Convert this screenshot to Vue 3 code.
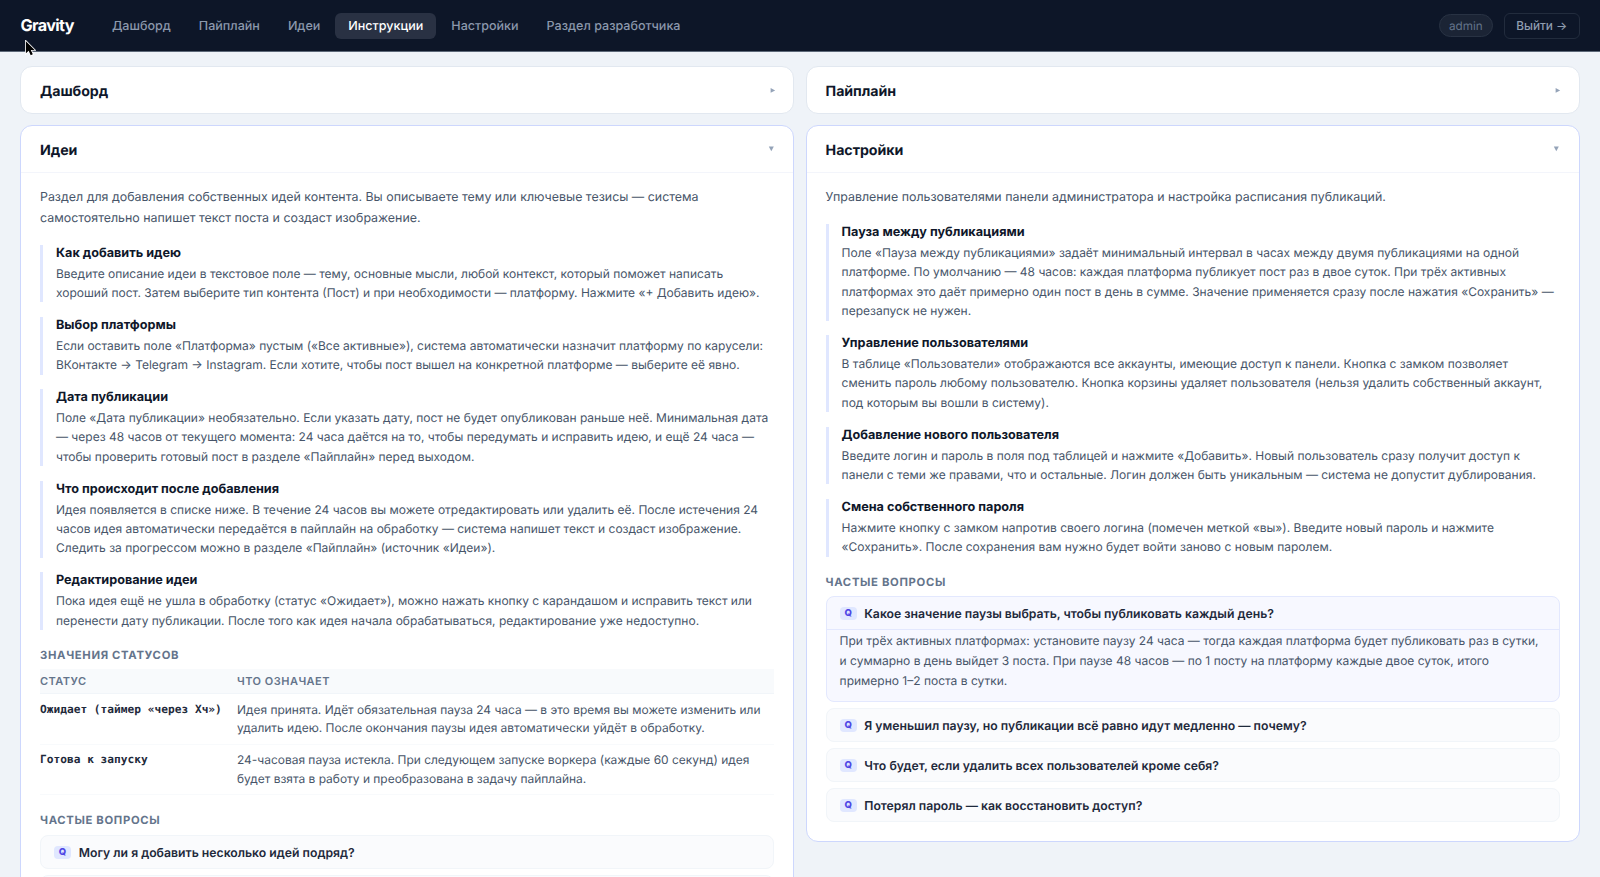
<template>
    <div class="page">
        <header class="topbar">
            <div class="brand">Gravity</div>
            <nav class="menu">
                <a v-for="item in menu" :key="item" class="menu-item" :class="{ active: item === current }" @click="current = item">{{ item }}</a>
            </nav>
            <span class="user">admin</span>
            <button class="logout">Выйти →</button>
        </header>
        <main class="columns">
            <div class="column" v-for="(column, index) in columns" :key="index">
                <section class="card" :class="{ open: card.open }" v-for="card in column" :key="card.title">
                    <div class="card-head" @click="card.open = !card.open">
                        <h2 class="card-title">{{ card.title }}</h2>
                        <svg v-if="card.open" class="arrow" viewBox="0 0 8 8"><path d="M.8 1.5h5L3.3 6.2z" /></svg>
                        <svg v-else class="arrow" viewBox="0 0 8 8"><path d="M2.6 2v4.8l4.6-2.4z" /></svg>
                    </div>
                    <div v-if="card.open && card.intro" class="card-body">
                        <p class="intro">{{ card.intro }}</p>
                        <div class="block" v-for="block in card.blocks" :key="block.title">
                            <h3 class="block-title">{{ block.title }}</h3>
                            <p class="block-text">{{ block.text }}</p>
                        </div>
                        <template v-if="card.statuses">
                            <h4 class="label">Значения статусов</h4>
                            <table class="statuses">
                                <thead>
                                    <tr><th>Статус</th><th>Что означает</th></tr>
                                </thead>
                                <tbody>
                                    <tr v-for="row in card.statuses" :key="row.name">
                                        <td class="status-name">{{ row.name }}</td>
                                        <td>{{ row.text }}</td>
                                    </tr>
                                </tbody>
                            </table>
                        </template>
                        <h4 class="label">Частые вопросы</h4>
                        <div class="faq" :class="{ open: item.open }" v-for="item in card.faq" :key="item.q">
                            <div class="question" @click="item.open = !item.open">
                                <span v-if="item.q" class="badge">Q</span>
                                <span>{{ item.q }}</span>
                            </div>
                            <p v-if="item.open && item.a" class="answer">{{ item.a }}</p>
                        </div>
                    </div>
                </section>
            </div>
        </main>
        <svg class="cursor" viewBox="0 0 12 18"><path d="M1 1v13.2l3-2.8 2.2 5 2.3-1-2.2-4.8h4.2z" /></svg>
    </div>
</template>

<script setup>
import { ref } from 'vue'

const menu = ['Дашборд', 'Пайплайн', 'Идеи', 'Инструкции', 'Настройки', 'Раздел разработчика']
const current = ref('Инструкции')

const columns = ref([
    [
        { title: 'Дашборд', open: false },
        {
            title: 'Идеи',
            open: true,
            intro: 'Раздел для добавления собственных идей контента. Вы описываете тему или ключевые тезисы — система самостоятельно напишет текст поста и создаст изображение.',
            blocks: [
                { title: 'Как добавить идею', text: 'Введите описание идеи в текстовое поле — тему, основные мысли, любой контекст, который поможет написать хороший пост. Затем выберите тип контента (Пост) и при необходимости — платформу. Нажмите «+ Добавить идею».' },
                { title: 'Выбор платформы', text: 'Если оставить поле «Платформа» пустым («Все активные»), система автоматически назначит платформу по карусели: ВКонтакте → Telegram → Instagram. Если хотите, чтобы пост вышел на конкретной платформе — выберите её явно.' },
                { title: 'Дата публикации', text: 'Поле «Дата публикации» необязательно. Если указать дату, пост не будет опубликован раньше неё. Минимальная дата — через 48 часов от текущего момента: 24 часа даётся на то, чтобы передумать и исправить идею, и ещё 24 часа — чтобы проверить готовый пост в разделе «Пайплайн» перед выходом.' },
                { title: 'Что происходит после добавления', text: 'Идея появляется в списке ниже. В течение 24 часов вы можете отредактировать или удалить её. После истечения 24 часов идея автоматически передаётся в пайплайн на обработку — система напишет текст и создаст изображение. Следить за прогрессом можно в разделе «Пайплайн» (источник «Идеи»).' },
                { title: 'Редактирование идеи', text: 'Пока идея ещё не ушла в обработку (статус «Ожидает»), можно нажать кнопку с карандашом и исправить текст или перенести дату публикации. После того как идея начала обрабатываться, редактирование уже недоступно.' }
            ],
            statuses: [
                { name: 'Ожидает (таймер «через Хч»)', text: 'Идея принята. Идёт обязательная пауза 24 часа — в это время вы можете изменить или удалить идею. После окончания паузы идея автоматически уйдёт в обработку.' },
                { name: 'Готова к запуску', text: '24-часовая пауза истекла. При следующем запуске воркера (каждые 60 секунд) идея будет взята в работу и преобразована в задачу пайплайна.' }
            ],
            faq: [
                { q: 'Могу ли я добавить несколько идей подряд?', open: false },
                { q: '', open: false }
            ]
        }
    ],
    [
        { title: 'Пайплайн', open: false },
        {
            title: 'Настройки',
            open: true,
            intro: 'Управление пользователями панели администратора и настройка расписания публикаций.',
            blocks: [
                { title: 'Пауза между публикациями', text: 'Поле «Пауза между публикациями» задаёт минимальный интервал в часах между двумя публикациями на одной платформе. По умолчанию — 48 часов: каждая платформа публикует пост раз в двое суток. При трёх активных платформах это даёт примерно один пост в день в сумме. Значение применяется сразу после нажатия «Сохранить» — перезапуск не нужен.' },
                { title: 'Управление пользователями', text: 'В таблице «Пользователи» отображаются все аккаунты, имеющие доступ к панели. Кнопка с замком позволяет сменить пароль любому пользователю. Кнопка корзины удаляет пользователя (нельзя удалить собственный аккаунт, под которым вы вошли в систему).' },
                { title: 'Добавление нового пользователя', text: 'Введите логин и пароль в поля под таблицей и нажмите «Добавить». Новый пользователь сразу получит доступ к панели с теми же правами, что и остальные. Логин должен быть уникальным — система не допустит дублирования.' },
                { title: 'Смена собственного пароля', text: 'Нажмите кнопку с замком напротив своего логина (помечен меткой «вы»). Введите новый пароль и нажмите «Сохранить». После сохранения вам нужно будет войти заново с новым паролем.' }
            ],
            faq: [
                { q: 'Какое значение паузы выбрать, чтобы публиковать каждый день?', open: true, a: 'При трёх активных платформах: установите паузу 24 часа — тогда каждая платформа будет публиковать раз в сутки, и суммарно в день выйдет 3 поста. При паузе 48 часов — по 1 посту на платформу каждые двое суток, итого примерно 1–2 поста в сутки.' },
                { q: 'Я уменьшил паузу, но публикации всё равно идут медленно — почему?', open: false },
                { q: 'Что будет, если удалить всех пользователей кроме себя?', open: false },
                { q: 'Потерял пароль — как восстановить доступ?', open: false }
            ]
        }
    ]
])
</script>

<style>
body {
    background: #eff3f8;
    overflow: hidden;
}
</style>

<style scoped>
.page {
    height: 877px;
    overflow: hidden;
    font-family: Inter, "Liberation Sans", sans-serif;
    text-rendering: geometricPrecision;
    color: #0f172a;
}
.page * {
    box-sizing: border-box;
}
.topbar {
    display: flex;
    align-items: center;
    height: 52px;
    padding: 0 20.4px;
    background: #0d1628;
    border-bottom: 1px solid #5d6878;
}
.brand {
    width: 78.4px;
    padding-bottom: 2px;
    font-size: 16.2px;
    font-weight: 700;
    letter-spacing: -0.6px;
    color: #fff;
}
.menu {
    display: flex;
    flex: 1;
    gap: 1.8px;
}
.menu-item {
    padding: 0 13.1px;
    height: 26px;
    line-height: 27px;
    border-radius: 6px;
    font-size: 12.55px;
    font-weight: 500;
    color: #8b98ac;
    cursor: pointer;
}
.menu-item.active {
    background: #293143;
    color: #fff;
}
.user {
    height: 23px;
    line-height: 22px;
    padding: 0 9.2px;
    margin-right: 11px;
    border: 1px solid #283243;
    border-radius: 12px;
    background: #1b2435;
    font-size: 11.7px;
    color: #64748b;
}
.logout {
    height: 26px;
    padding: 0 11.3px;
    border: 1px solid #222c3d;
    border-radius: 6px;
    background: none;
    font-family: inherit;
    font-size: 11.8px;
    font-weight: 500;
    color: #8f9caf;
}
.columns {
    display: grid;
    grid-template-columns: 1fr 1fr;
    gap: 12px;
    padding: 14.4px 20.4px;
}
.column {
    display: flex;
    flex-direction: column;
    gap: 11.4px;
}
.card {
    border: 1px solid #e2e8f0;
    border-radius: 12px;
    background: #fff;
}
.card.open {
    border-color: #cdd7fd;
}
.card-head {
    display: flex;
    align-items: center;
    justify-content: space-between;
    height: 45.6px;
    padding: 0 17.2px 0 18.6px;
}
.card.open .card-head {
    height: 46px;
}
.card-title {
    margin: 0;
    padding-top: 2px;
    font-size: 14.2px;
    font-weight: 700;
    letter-spacing: -0.05px;
}
.arrow {
    width: 8px;
    height: 8px;
    fill: #94a3b8;
}
.card-body {
    padding: 14px 18.6px 18.6px;
    border-top: 1px solid #f3f5fb;
}
.intro {
    margin: 0 0 16px;
    font-size: 12.42px;
    line-height: 20.6px;
    color: #475569;
}
.block {
    margin-bottom: 14.4px;
    padding-left: 13px;
    border-left: 3px solid #e0e7ff;
}
.block-title {
    margin: 0 0 1px;
    font-size: 12.65px;
    line-height: 18px;
    font-weight: 700;
}
.block-text {
    margin: 0;
    font-size: 12px;
    line-height: 19.4px;
    color: #475569;
}
.label {
    margin: 18px 0 6px;
    font-size: 11.3px;
    line-height: 15.4px;
    font-weight: 700;
    letter-spacing: 0.66px;
    text-transform: uppercase;
    color: #64748b;
}
.statuses {
    width: 100%;
    border-collapse: collapse;
    font-size: 11.96px;
    color: #475569;
}
.statuses th {
    height: 24.4px;
    padding: 0;
    background: #f8fafc;
    border-bottom: 1px solid #f1f5f9;
    font-size: 11px;
    font-weight: 600;
    letter-spacing: 0.48px;
    text-align: left;
    text-transform: uppercase;
    color: #64748b;
}
.statuses td {
    padding: 6.6px 0 6.4px;
    line-height: 18.3px;
    vertical-align: top;
    border-bottom: 1px solid #f8fafc;
}
.statuses .status-name {
    width: 197px;
    font-family: "DejaVu Sans Mono", monospace;
    font-size: 11.2px;
    line-height: 17px;
    font-weight: 700;
    color: #1e293b;
    white-space: nowrap;
}
.faq {
    margin-bottom: 6px;
    border: 1px solid #f1f5f9;
    border-radius: 8px;
    background: #fafbfd;
}
.faq:last-child {
    margin-bottom: 0;
}
.faq.open {
    border-color: #e3e8fe;
    background: #f7f8ff;
}
.question {
    display: flex;
    align-items: center;
    gap: 7.7px;
    height: 32px;
    padding: 1px 13px 0;
    font-size: 12.22px;
    font-weight: 600;
    color: #1e293b;
}
.badge {
    width: 17px;
    height: 13px;
    border-radius: 4px;
    background: #e0e7ff;
    font-size: 9.5px;
    line-height: 13px;
    font-weight: 800;
    text-align: center;
    color: #4f46e5;
}
.answer {
    margin: 0;
    padding: 0.5px 13px 10.8px;
    border-top: 1px solid #e3e8fe;
    font-size: 12px;
    line-height: 20px;
    color: #475569;
}
.cursor {
    position: absolute;
    left: 25px;
    top: 40px;
    width: 11px;
    height: 17px;
    fill: #000;
    stroke: #fff;
    stroke-width: 1.8;
    paint-order: stroke;
}
</style>
